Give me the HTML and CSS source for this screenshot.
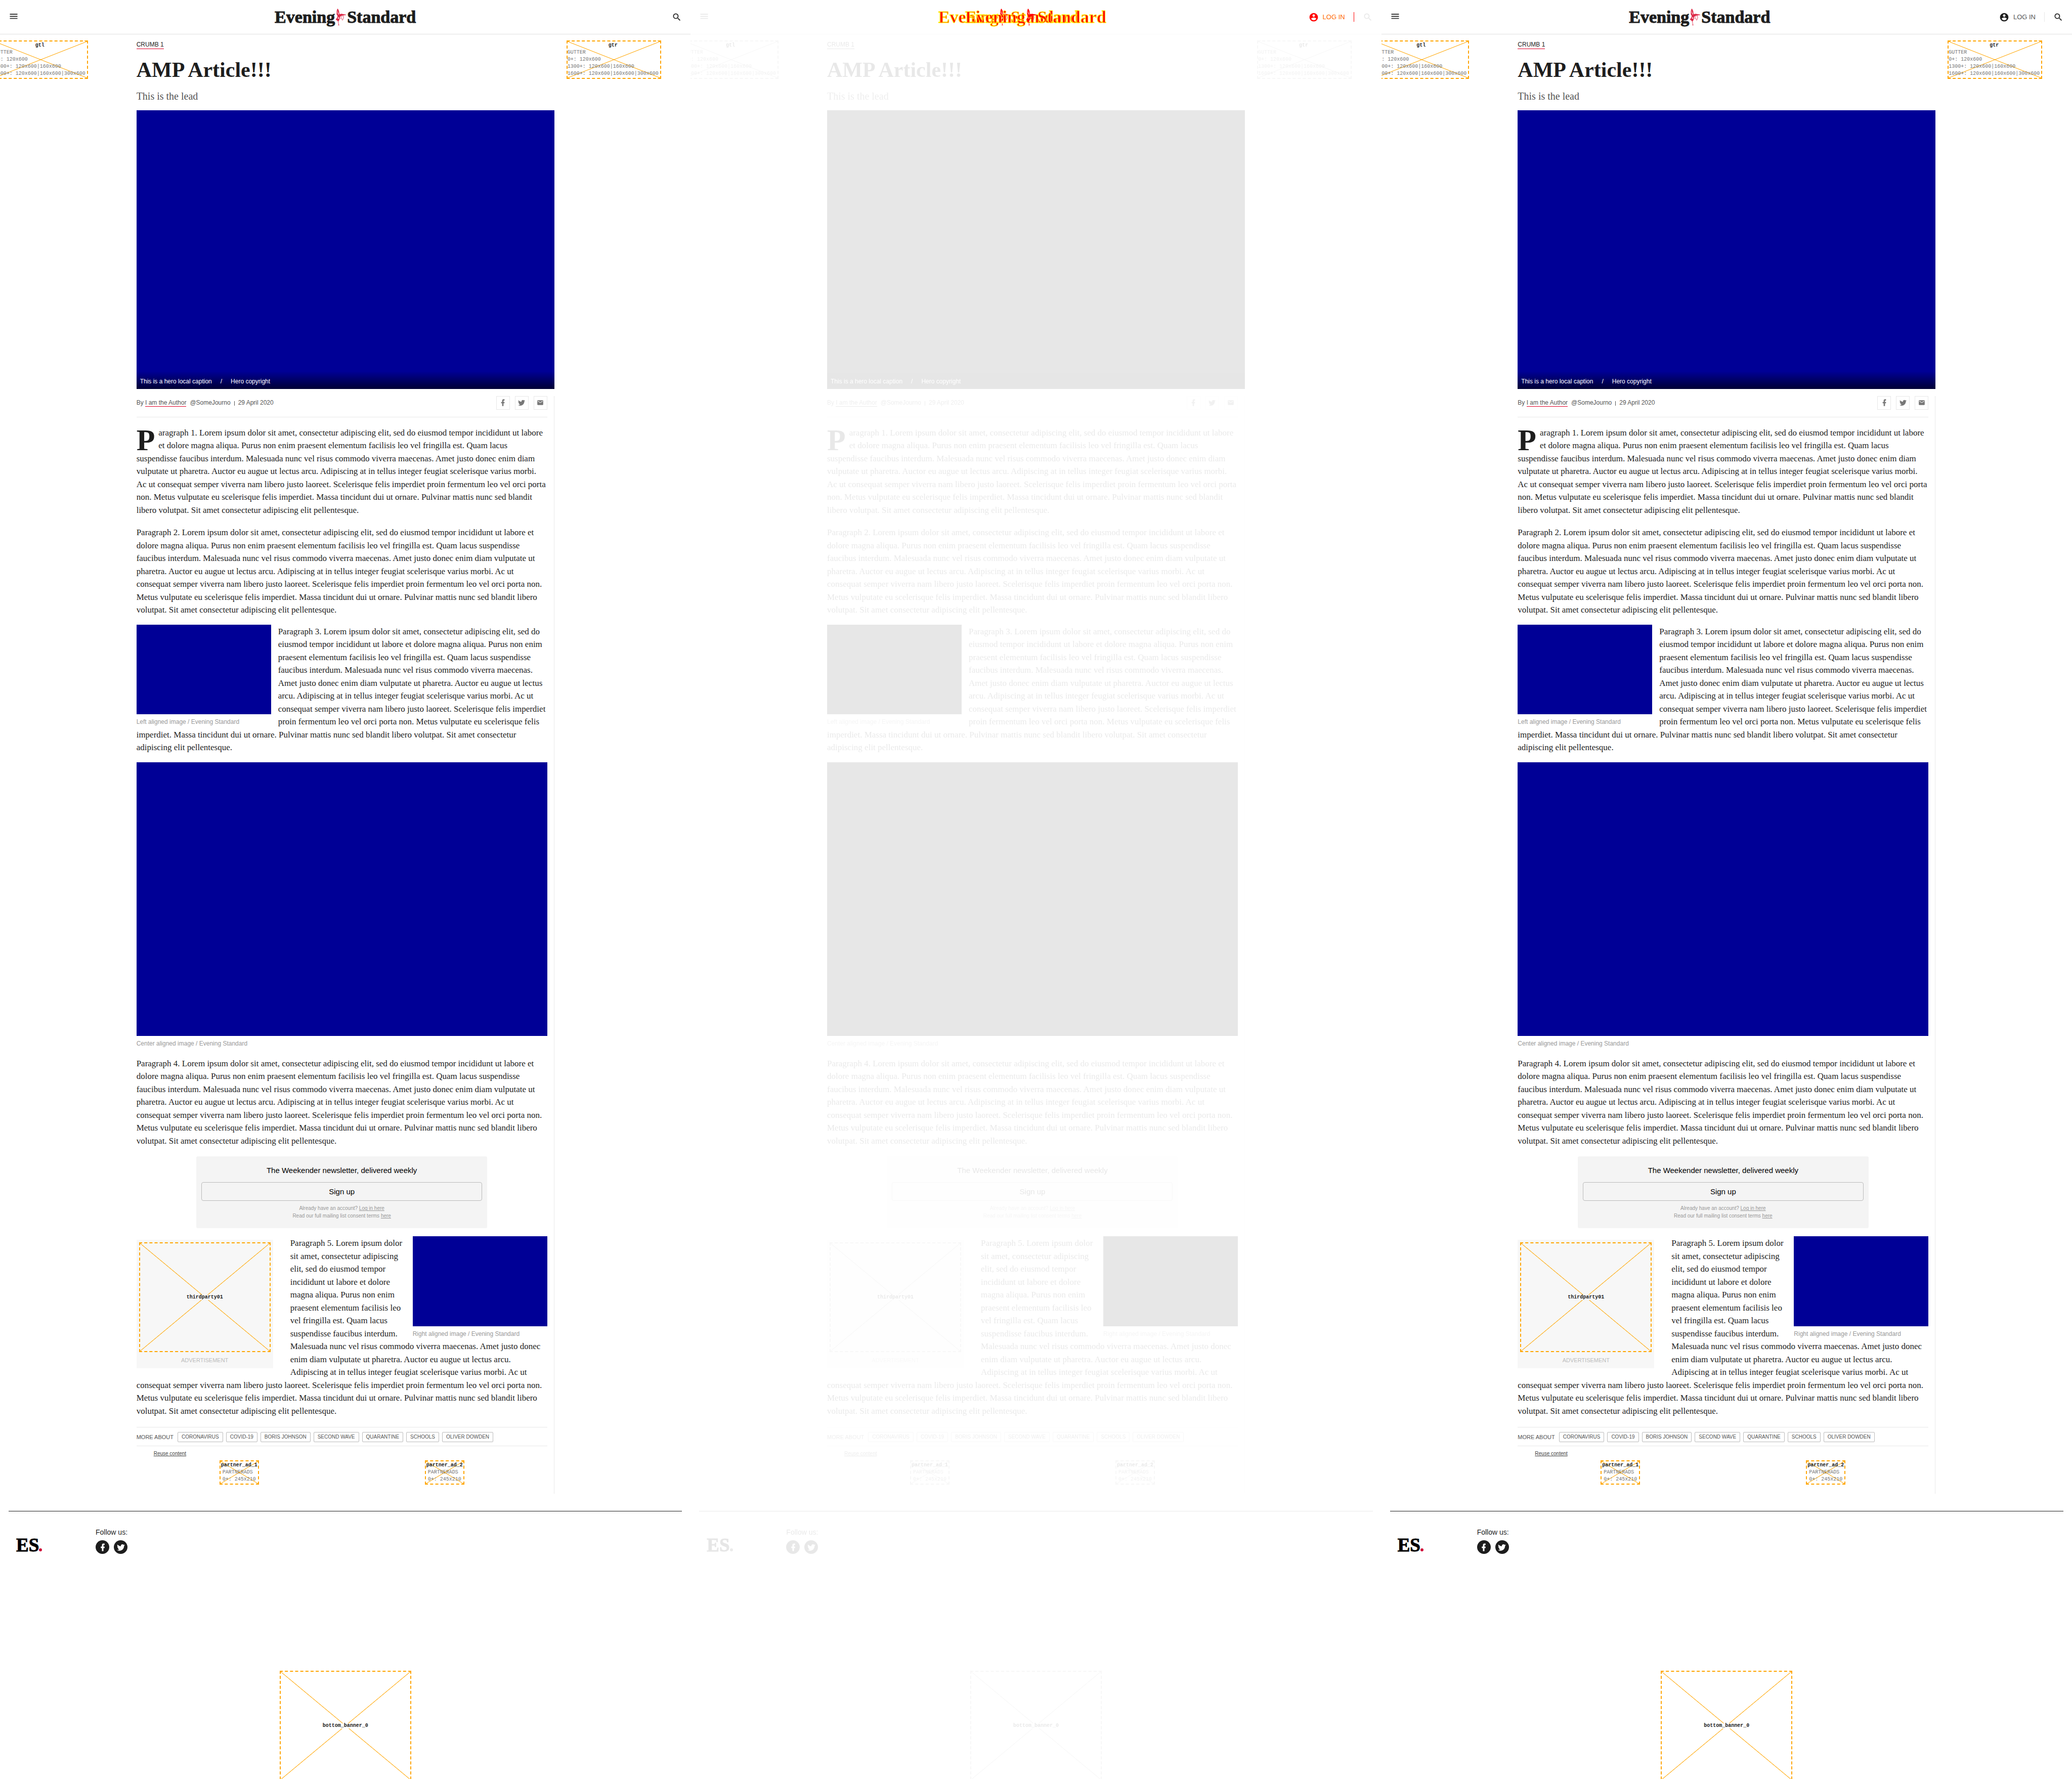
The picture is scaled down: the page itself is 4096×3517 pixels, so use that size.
FILE: index.html
```html
<!DOCTYPE html>
<html lang="en">
<head>
<meta charset="utf-8">
<title>AMP Article!!! | Evening Standard</title>
<link rel="stylesheet" href="styles.css">
</head>
<body>
<svg class="sprite" aria-hidden="true">
  <symbol id="i-menu" viewBox="0 0 24 24"><path d="M3 4h18v2H3zM3 9h18v2H3zM3 14h18v2H3z"/></symbol>
  <symbol id="i-search" viewBox="0 0 24 24"><path d="M15.5 14h-.79l-.28-.27A6.47 6.47 0 0 0 16 9.5 6.5 6.5 0 1 0 9.5 16c1.61 0 3.09-.59 4.23-1.57l.27.28v.79l5 4.99L20.49 19l-4.99-5zm-6 0C7.01 14 5 11.99 5 9.5S7.01 5 9.5 5 14 7.01 14 9.5 11.99 14 9.5 14z"/></symbol>
  <symbol id="i-user" viewBox="0 0 24 24"><path d="M12 2C6.48 2 2 6.48 2 12s4.48 10 10 10 10-4.48 10-10S17.52 2 12 2zm0 3c1.66 0 3 1.34 3 3s-1.34 3-3 3-3-1.34-3-3 1.34-3 3-3zm0 14.2c-2.5 0-4.71-1.28-6-3.22.03-1.99 4-3.08 6-3.08 1.99 0 5.97 1.09 6 3.08-1.29 1.94-3.5 3.22-6 3.22z"/></symbol>
  <symbol id="i-facebook" viewBox="0 0 24 24"><path d="M17 2v4h-2c-.7 0-1 .8-1 1.5V10h3v4h-3v8h-4v-8H7v-4h3V6a4 4 0 0 1 4-4z"/></symbol>
  <symbol id="i-twitter" viewBox="0 0 24 24"><path d="M22.46 6c-.77.35-1.6.58-2.46.69.88-.53 1.56-1.37 1.88-2.38-.83.5-1.75.85-2.72 1.05C18.37 4.5 17.26 4 16 4c-2.35 0-4.27 1.92-4.27 4.29 0 .34.04.67.11.98C8.28 9.09 5.11 7.38 3 4.79c-.37.63-.58 1.37-.58 2.15 0 1.49.75 2.81 1.91 3.56-.71 0-1.37-.2-1.95-.5v.03c0 2.08 1.48 3.82 3.44 4.21a4.22 4.22 0 0 1-1.93.07 4.28 4.28 0 0 0 4 2.98 8.52 8.52 0 0 1-5.33 1.84c-.34 0-.68-.02-1.02-.06C3.44 20.29 5.7 21 8.12 21 16 21 20.33 14.46 20.33 8.79c0-.19 0-.37-.01-.56.84-.6 1.56-1.36 2.14-2.23z"/></symbol>
  <symbol id="i-mail" viewBox="0 0 24 24"><path d="M20 4H4c-1.1 0-2 .9-2 2v12c0 1.1.9 2 2 2h16c1.1 0 2-.9 2-2V6c0-1.1-.9-2-2-2zm0 4l-8 5-8-5V6l8 5 8-5v2z"/></symbol>
  <symbol id="i-eros" viewBox="0 0 25 39"><path d="M4 0c2 2 4 6 4 10l1 3 4-1 5 1 6 1v1l-7 1-4 1-3 2-1 4-1 4-2 3 1 8 2 1v1H4v-1l2-1-1-8-2-2-3-2v-1l3-4 1-4-2-3C1 8 2 3 4 0zm0 3L3 9l1 3zm2 4-1 6 2 1zm1 12-3 4 3 1z" fill-rule="evenodd"/><path d="M17 16l1 6-3 6M14 18l-3 5 5 2" fill="none" stroke="currentColor" stroke-width="1"/></symbol>
</svg>

<main class="board"></main>

<template id="page">
  <div class="page">
    <header class="header">
      <button class="icon-btn plain" aria-label="Menu"><svg><use href="#i-menu"/></svg></button>
      <a class="logo" href="#"><span>Evening</span><svg class="eros"><use href="#i-eros"/></svg><span>Standard</span></a>
      <div class="tools">
        <a class="login" href="#"><svg><use href="#i-user"/></svg><span>LOG IN</span></a>
        <button class="icon-btn plain" aria-label="Search"><svg><use href="#i-search"/></svg></button>
      </div>
    </header>
    <div class="columns plain">
      <aside class="gutter gutter-left">
        <div class="slot"><strong>gtl</strong><span>GUTTER</span><span>0+: 120x600</span><span>1300+: 120x600|160x600</span><span>1600+: 120x600|160x600|300x600</span></div>
      </aside>
      <article class="article">
        <a class="crumb" href="#">CRUMB 1</a>
        <h1>AMP Article!!!</h1>
        <p class="lead">This is the lead</p>
        <figure class="hero"><figcaption><span>This is a hero local caption</span><span>/</span><span>Hero copyright</span></figcaption></figure>
        <div class="body">
          <div class="byline">
            <p>By <a class="author" href="#">I am the Author</a><span class="handle">@SomeJourno</span><span class="bar"></span><time datetime="2020-04-29">29 April 2020</time></p>
            <div class="share">
              <a href="#" aria-label="Facebook"><svg class="fb"><use href="#i-facebook"/></svg></a>
              <a href="#" aria-label="Twitter"><svg class="tw"><use href="#i-twitter"/></svg></a>
              <a href="#" aria-label="Email"><svg class="ml"><use href="#i-mail"/></svg></a>
            </div>
          </div>
          <div class="story">
            <p><span class="dropcap">P</span>aragraph 1. Lorem ipsum dolor sit amet, consectetur adipiscing elit, sed do eiusmod tempor incididunt ut labore et dolore magna aliqua. Purus non enim praesent elementum facilisis leo vel fringilla est. Quam lacus suspendisse faucibus interdum. Malesuada nunc vel risus commodo viverra maecenas. Amet justo donec enim diam vulputate ut pharetra. Auctor eu augue ut lectus arcu. Adipiscing at in tellus integer feugiat scelerisque varius morbi. Ac ut consequat semper viverra nam libero justo laoreet. Scelerisque felis imperdiet proin fermentum leo vel orci porta non. Metus vulputate eu scelerisque felis imperdiet. Massa tincidunt dui ut ornare. Pulvinar mattis nunc sed blandit libero volutpat. Sit amet consectetur adipiscing elit pellentesque.</p>
            <p>Paragraph 2. Lorem ipsum dolor sit amet, consectetur adipiscing elit, sed do eiusmod tempor incididunt ut labore et dolore magna aliqua. Purus non enim praesent elementum facilisis leo vel fringilla est. Quam lacus suspendisse faucibus interdum. Malesuada nunc vel risus commodo viverra maecenas. Amet justo donec enim diam vulputate ut pharetra. Auctor eu augue ut lectus arcu. Adipiscing at in tellus integer feugiat scelerisque varius morbi. Ac ut consequat semper viverra nam libero justo laoreet. Scelerisque felis imperdiet proin fermentum leo vel orci porta non. Metus vulputate eu scelerisque felis imperdiet. Massa tincidunt dui ut ornare. Pulvinar mattis nunc sed blandit libero volutpat. Sit amet consectetur adipiscing elit pellentesque.</p>
            <figure class="photo photo-left"><div class="picture"></div><figcaption>Left aligned image / Evening Standard</figcaption></figure>
            <p>Paragraph 3. Lorem ipsum dolor sit amet, consectetur adipiscing elit, sed do eiusmod tempor incididunt ut labore et dolore magna aliqua. Purus non enim praesent elementum facilisis leo vel fringilla est. Quam lacus suspendisse faucibus interdum. Malesuada nunc vel risus commodo viverra maecenas. Amet justo donec enim diam vulputate ut pharetra. Auctor eu augue ut lectus arcu. Adipiscing at in tellus integer feugiat scelerisque varius morbi. Ac ut consequat semper viverra nam libero justo laoreet. Scelerisque felis imperdiet proin fermentum leo vel orci porta non. Metus vulputate eu scelerisque felis imperdiet. Massa tincidunt dui ut ornare. Pulvinar mattis nunc sed blandit libero volutpat. Sit amet consectetur adipiscing elit pellentesque.</p>
            <figure class="photo"><div class="picture"></div><figcaption>Center aligned image / Evening Standard</figcaption></figure>
            <p>Paragraph 4. Lorem ipsum dolor sit amet, consectetur adipiscing elit, sed do eiusmod tempor incididunt ut labore et dolore magna aliqua. Purus non enim praesent elementum facilisis leo vel fringilla est. Quam lacus suspendisse faucibus interdum. Malesuada nunc vel risus commodo viverra maecenas. Amet justo donec enim diam vulputate ut pharetra. Auctor eu augue ut lectus arcu. Adipiscing at in tellus integer feugiat scelerisque varius morbi. Ac ut consequat semper viverra nam libero justo laoreet. Scelerisque felis imperdiet proin fermentum leo vel orci porta non. Metus vulputate eu scelerisque felis imperdiet. Massa tincidunt dui ut ornare. Pulvinar mattis nunc sed blandit libero volutpat. Sit amet consectetur adipiscing elit pellentesque.</p>
            <section class="newsletter">
              <h2>The Weekender newsletter, delivered weekly</h2>
              <button class="signup">Sign up</button>
              <div class="terms">Already have an account? <a href="#">Log in here</a></div>
              <div class="terms">Read our full mailing list consent terms <a href="#">here</a></div>
            </section>
            <figure class="photo photo-right"><div class="picture"></div><figcaption>Right aligned image / Evening Standard</figcaption></figure>
            <aside class="ad"><div class="slot slot-mpu"><strong>thirdparty01</strong></div><div class="ad-label">ADVERTISEMENT</div></aside>
            <p>Paragraph 5. Lorem ipsum dolor sit amet, consectetur adipiscing elit, sed do eiusmod tempor incididunt ut labore et dolore magna aliqua. Purus non enim praesent elementum facilisis leo vel fringilla est. Quam lacus suspendisse faucibus interdum. Malesuada nunc vel risus commodo viverra maecenas. Amet justo donec enim diam vulputate ut pharetra. Auctor eu augue ut lectus arcu. Adipiscing at in tellus integer feugiat scelerisque varius morbi. Ac ut consequat semper viverra nam libero justo laoreet. Scelerisque felis imperdiet proin fermentum leo vel orci porta non. Metus vulputate eu scelerisque felis imperdiet. Massa tincidunt dui ut ornare. Pulvinar mattis nunc sed blandit libero volutpat. Sit amet consectetur adipiscing elit pellentesque.</p>
          </div>
          <nav class="topics">
            <span class="topics-title">MORE ABOUT</span>
            <a href="#">CORONAVIRUS</a><a href="#">COVID-19</a><a href="#">BORIS JOHNSON</a><a href="#">SECOND WAVE</a><a href="#">QUARANTINE</a><a href="#">SCHOOLS</a><a href="#">OLIVER DOWDEN</a>
          </nav>
          <a class="reuse" href="#">Reuse content</a>
          <div class="partners">
            <div class="slot"><strong>partner_ad_1</strong><span class="inset">PARTNERADS</span><span class="inset">0+: 245x210</span></div>
            <div class="slot"><strong>partner_ad_2</strong><span class="inset">PARTNERADS</span><span class="inset">0+: 245x210</span></div>
          </div>
        </div>
      </article>
      <aside class="gutter gutter-right">
        <div class="slot"><strong>gtr</strong><span>GUTTER</span><span>0+: 120x600</span><span>1300+: 120x600|160x600</span><span>1600+: 120x600|160x600|300x600</span></div>
      </aside>
    </div>
    <footer class="footer plain">
      <a class="es" href="#" aria-label="Evening Standard">ES<span class="dot"></span></a>
      <div class="follow">
        <span>Follow us:</span>
        <div class="follow-links">
          <a href="#" aria-label="Facebook"><svg><use href="#i-facebook"/></svg></a>
          <a href="#" aria-label="Twitter"><svg><use href="#i-twitter"/></svg></a>
        </div>
      </div>
    </footer>
    <div class="slot slot-mpu slot-banner plain"><strong>bottom_banner_0</strong></div>
  </div>
</template>
<script src="script.js"></script>
</body>
</html>
```

FILE: styles.css
```css
* { box-sizing: border-box; }

:root {
  --ink: #1d1d1d;
  --rule: #e8e8e8;
  --grey: #999;
  --orange: #ffa500;
  --blue: #000096;
  --sans: "Liberation Sans", Arial, sans-serif;
  --serif: "Liberation Serif", "Times New Roman", serif;
  --mono: "Liberation Mono", "Courier New", monospace;
}

body { margin: 0; background: #fff; color: var(--ink); font-family: var(--sans); }
h1, h2, p, figure { margin: 0; }
a { color: inherit; text-decoration: none; }
button { font: inherit; color: inherit; background: none; border: 0; padding: 0; }
svg { display: block; fill: currentColor; }
.sprite { display: none; }

.board { display: grid; grid-template-columns: repeat(3, minmax(0, 1fr)); }
.page { overflow: hidden; }

/* header */
.header { display: flex; align-items: center; justify-content: space-between; height: 68px; padding: 0 17px; border-bottom: 1px solid #e0e0e0; }
.icon-btn svg { width: 20px; height: 20px; }
.logo { position: relative; display: flex; align-items: flex-end; height: 33px; font: bold 34px/34px var(--serif); -webkit-text-stroke: 1px currentColor; }
.logo span { height: 33px; }
.eros { width: 21px; height: 33px; margin: 0 1px 0 2px; color: #dd2a48; }
.tools, .login { display: flex; align-items: center; }
.login { display: none; gap: 8px; margin-right: 17px; font-size: 13px; }
.login svg { width: 20px; height: 20px; }
.login span { color: #555; padding-right: 17px; border-right: 1px solid var(--rule); line-height: 19px; }
.with-login .login { display: flex; }

/* difference view: unchanged parts fade, changed parts turn red */
.diff .plain { filter: grayscale(1) opacity(0.1); }
.diff .header { border-color: #fafafa; }
.diff .logo, .diff .eros, .diff .login { color: #f00; }
.diff .logo { -webkit-text-stroke-color: #ff0; }
.diff .ghost { position: absolute; left: 53px; top: 0; }
.diff .login span { color: #ff6a00; border-color: #f00; }

/* columns */
.columns { display: grid; grid-template-columns: 1fr minmax(0, 826px) 1fr; }
.gutter { display: flex; align-items: flex-start; min-width: 0; padding-top: 12px; }
.gutter-left { justify-content: flex-end; padding-right: 96px; }
.gutter-right { padding-left: 24px; }

.slot {
  display: flex; flex-direction: column; flex: none; padding: 1px;
  border: 2px dashed var(--orange);
  font: 10px/14px var(--mono); color: #777; white-space: nowrap;
  background:
    linear-gradient(to top right, transparent calc(50% - 1px), var(--orange), transparent calc(50% + 1px)),
    linear-gradient(to bottom right, transparent calc(50% - 1px), var(--orange), transparent calc(50% + 1px));
}
.slot strong { align-self: center; color: var(--ink); }
.gutter .slot { padding: 1px 3px 1px 0; }
.inset { padding-left: 3px; }
.slot-mpu { width: 260px; height: 217px; justify-content: center; }
.slot-mpu strong { background: #fff; line-height: 10px; }

/* article */
.article { padding-top: 13px; }
.crumb { display: block; width: max-content; font-size: 12px; line-height: 15px; border-bottom: 1px solid #e00028; }
h1 { margin-top: 17px; font: bold 42px/48px var(--serif); }
.lead { margin-top: 16px; font: 20px/24px var(--serif); color: #555; }
.hero { margin-top: 16px; aspect-ratio: 3 / 2; display: flex; align-items: flex-end; background: var(--blue); }
.hero figcaption { flex: 1; display: flex; gap: 17px; padding: 12px 7px 7px; font-size: 12px; line-height: 16px; color: #fff; background: linear-gradient(transparent, rgba(0, 0, 0, 0.65)); }
.body { margin-top: 14px; padding: 0 13px 18px 0; border-right: 1px solid var(--rule); }

.byline { display: flex; align-items: center; justify-content: space-between; padding-bottom: 14px; border-bottom: 1px solid var(--rule); font-size: 12px; line-height: 15px; color: #555; }
.byline p { display: flex; align-items: center; white-space: pre; }
.author { border-bottom: 1px solid #e00028; line-height: 14px; }
.handle { margin-left: 7px; }
.bar { width: 1px; height: 9px; margin: 2px 7px 0; background: #555; }
.share { display: flex; gap: 10px; }
.share a { display: grid; place-items: center; width: 27px; height: 27px; border: 1px solid var(--rule); color: #777; }
.fb, .tw { width: 16px; height: 16px; }
.ml { width: 14px; height: 14px; }

.story { font: 17px/1.5 var(--serif); }
.story > p { padding-top: 19px; }
.story > p:first-child { padding-top: 18px; }
.story > .photo-left + p, .story > .ad + p { padding-top: 17px; }
.dropcap { float: left; height: 51px; margin-right: 7px; font-size: 60px; line-height: 54px; font-weight: bold; }
.photo { margin-top: 16px; }
.picture { aspect-ratio: 3 / 2; background: var(--blue); }
.photo figcaption { margin-top: 7px; font: 12px/16px var(--sans); color: var(--grey); }
.photo-left { float: left; width: 266px; margin-right: 14px; }
.photo-right { float: right; width: 266px; margin-left: 14px; }

.newsletter { width: 575px; max-width: 100%; margin: 18px auto 0; padding: 18px 10px 17px; border-radius: 3px; background: #f4f4f4; font-family: var(--sans); text-align: center; }
.newsletter h2 { font-size: 15px; line-height: 20px; font-weight: normal; color: #000; }
.signup { display: block; width: 100%; height: 37px; margin: 13px 0 7px; border: 1px solid #bbb; border-radius: 4px; font-size: 15px; color: #000; }
.terms { font-size: 10px; line-height: 15px; color: var(--grey); }
.terms a, .reuse { text-decoration: underline; }

.ad { float: left; width: 270px; margin: 23px 34px 14px 0; padding: 5px 5px 8px; background: #f7f7f7; }
.ad strong { background: #f7f7f7; }
.ad-label { margin-top: 8px; font: 11px/16px var(--sans); color: #bbb; text-align: center; }

.topics { display: flex; align-items: center; gap: 6px; margin-top: 19px; padding: 9px 0 7px; border: solid var(--rule); border-width: 1px 0; color: #555; font-size: 10px; line-height: 18px; }
.topics a { padding: 0 7px; border: 1px solid #bbb; border-radius: 2px; }
.topics-title { font-size: 11px; margin-right: 2px; }
.reuse { display: block; margin: 7px 0 5px 34px; font-size: 10px; line-height: 16px; color: #444; }
.partners { display: grid; grid-template-columns: 1fr 1fr; justify-items: center; }

/* footer */
.footer { display: flex; align-items: flex-start; margin: 34px 17px 228px; padding: 31px 15px 0; border-top: 1px solid var(--ink); }
.es { width: 157px; padding-top: 16px; font: bold 37px/40px var(--serif); color: #000; -webkit-text-stroke: 1px currentColor; }
.dot { display: inline-block; width: 6px; height: 6px; border-radius: 50%; background: #d0103a; }
.follow { font-size: 14px; line-height: 20px; }
.follow-links { display: flex; gap: 9px; margin-top: 6px; }
.follow-links a { display: grid; place-items: center; width: 27px; height: 27px; border-radius: 50%; background: var(--ink); color: #fff; }
.follow-links svg { width: 18px; height: 18px; }
.slot-banner { height: 215px; margin: 0 auto; border-bottom: 0; }
```

FILE: script.js
```js
// Three views of the same page: baseline, difference and candidate.
const board = document.querySelector('.board');
const template = document.getElementById('page');

for (const view of ['baseline', 'diff with-login', 'with-login']) {
  const page = template.content.cloneNode(true).firstElementChild;
  page.classList.add(...view.split(' '));
  board.append(page);
}

// The difference view overlays the logo at both of its positions.
const logo = board.querySelector('.diff .logo');
const ghost = logo.cloneNode(true);
ghost.classList.add('ghost');
logo.append(ghost);
```
